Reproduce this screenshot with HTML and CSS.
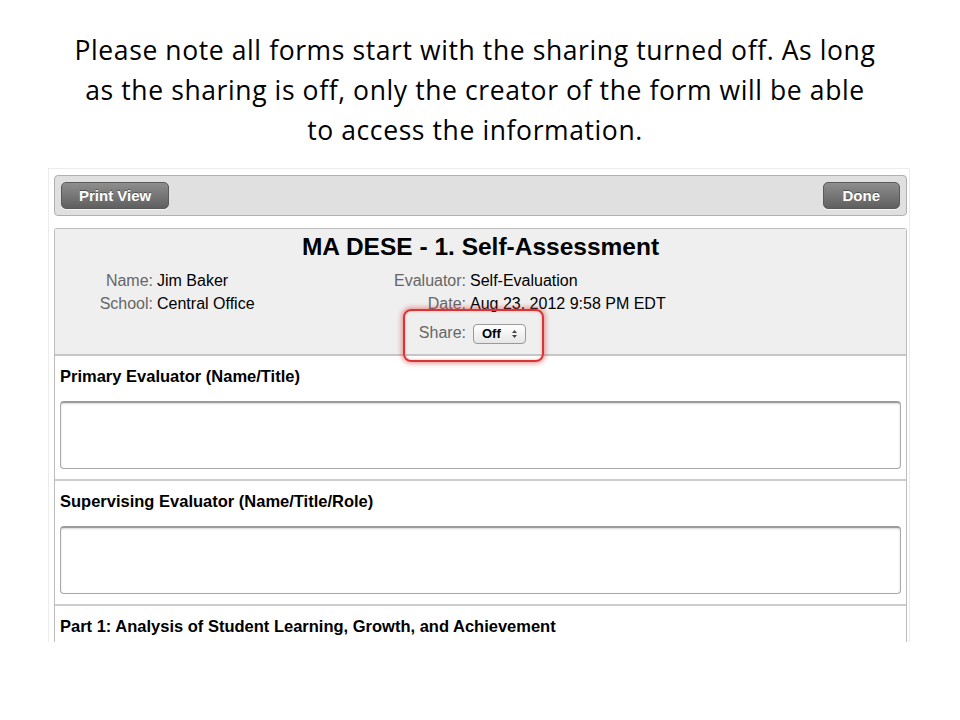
FILE: index.html
```html
<!DOCTYPE html>
<html lang="en">
<head>
  <meta charset="UTF-8" />
  <title>Sharing Off</title>
  <link rel="stylesheet" href="styles.css">
</head>
<body>
  <p class="caption">
    Please note all forms start with the sharing turned off. As long<br>
    as the sharing is off, only the creator of the form will be able<br>
    to access the information.
  </p>

  <div class="shot">
    <div class="toolbar">
      <button class="btn">Print View</button>
      <button class="btn">Done</button>
    </div>

    <div class="panel">
      <div class="form-head">
        <h2>MA DESE - 1. Self-Assessment</h2>
        <div class="info">
          <span class="lbl">Name:</span><span class="val">Jim Baker</span>
          <span class="lbl">Evaluator:</span><span class="val">Self-Evaluation</span>
          <span class="lbl">School:</span><span class="val">Central Office</span>
          <span class="lbl">Date:</span><span class="val">Aug 23, 2012 9:58 PM EDT</span>
          <span class="lbl share-lbl">Share:</span>
          <span class="val share-val">
            <span class="select">Off
              <svg width="7" height="10" viewBox="0 0 7 10"><path d="M1 4 L3.5 1 L6 4 Z M1 6 L3.5 9 L6 6 Z" fill="#444"/></svg>
            </span>
          </span>
        </div>
        <div class="highlight"></div>
      </div>

      <div class="section">
        <div class="q">Primary Evaluator (Name/Title)</div>
        <textarea class="answer"></textarea>
      </div>
      <div class="section">
        <div class="q">Supervising Evaluator (Name/Title/Role)</div>
        <textarea class="answer"></textarea>
      </div>
      <div class="section last">
        <div class="q">Part 1: Analysis of Student Learning, Growth, and Achievement</div>
      </div>
    </div>
  </div>
</body>
</html>
```

FILE: styles.css
```css
body {
  margin: 0;
  background: #fff;
  color: #000;
}

.caption {
  margin: 0;
  padding: 30px 10px 0 0;
  font-family: "Open Sans", "Liberation Sans", sans-serif;
  font-size: 26.5px;
  letter-spacing: 0.6px;
  line-height: 40px;
  text-align: center;
}

.shot {
  margin: 18px 0 0 48px;
  width: 853px;
  height: 467px;
  overflow: hidden;
  padding: 6px 2px 0 5px;
  border: 1px solid #ececec;
  border-bottom: none;
  font-family: "Liberation Sans", Arial, sans-serif;
}

.toolbar {
  display: flex;
  justify-content: space-between;
  padding: 6px;
  border: 1px solid #b0b0b0;
  border-radius: 4px;
  background: #e0e0e0;
}

.btn {
  height: 27px;
  padding: 0 17px;
  border: 1px solid #5a5a5a;
  border-radius: 5px;
  background: linear-gradient(#8e8e8e, #5f5f5f);
  color: #fff;
  font-family: "Liberation Sans", Arial, sans-serif;
  font-size: 15px;
  font-weight: bold;
  text-shadow: 0 -1px 0 rgba(0, 0, 0, 0.4);
  box-shadow: 0 1px 0 rgba(255, 255, 255, 0.6);
}

.btn + .btn {
  padding: 0 19px;
}

.panel {
  margin-top: 12px;
  border: 1px solid #bdbdbd;
  border-bottom: none;
  border-radius: 3px 3px 0 0;
}

.form-head {
  position: relative;
  background: #efefef;
  padding: 5px 0 6px;
  border-bottom: 2px solid #c6c6c6;
}

.form-head h2 {
  margin: 0;
  font-size: 24.5px;
  line-height: 26px;
  text-align: center;
}

.info {
  display: grid;
  grid-template-columns: 98px 233px 72px auto;
  column-gap: 4px;
  margin-top: 9px;
  font-size: 16px;
  line-height: 23px;
}

.lbl {
  text-align: right;
  color: #666;
}

.share-lbl,
.share-val {
  margin-top: 3px;
  line-height: 30px;
}

.share-lbl {
  grid-column: 3;
}

.select {
  display: inline-flex;
  align-items: center;
  justify-content: space-between;
  box-sizing: border-box;
  width: 53px;
  height: 20px;
  margin-left: 3px;
  padding: 0 7px 0 8px;
  border: 1px solid #9a9a9a;
  border-radius: 4px;
  background: linear-gradient(#ffffff, #e6e6e6);
  font-size: 13px;
  font-weight: bold;
  line-height: 18px;
  vertical-align: middle;
}

.highlight {
  position: absolute;
  left: 348px;
  top: 80px;
  width: 137px;
  height: 49px;
  border: 2px solid #d83535;
  border-radius: 8px;
  box-shadow: 0 0 4px 2px rgba(220, 60, 60, 0.45), inset 0 0 3px rgba(220, 60, 60, 0.4);
}

.section {
  padding: 11px 0 10px 5px;
  border-bottom: 2px solid #cdcdcd;
}

.section.last {
  border-bottom: none;
}

.q {
  font-size: 16.5px;
  font-weight: bold;
  line-height: 18px;
}

.answer {
  display: block;
  box-sizing: border-box;
  width: 841px;
  height: 68px;
  margin-top: 16px;
  border: 1px solid #a8a8a8;
  border-top: 2px solid #9c9c9c;
  border-radius: 4px;
  background: #fff;
  box-shadow: inset 0 1px 2px rgba(0, 0, 0, 0.15);
  resize: none;
}
```
